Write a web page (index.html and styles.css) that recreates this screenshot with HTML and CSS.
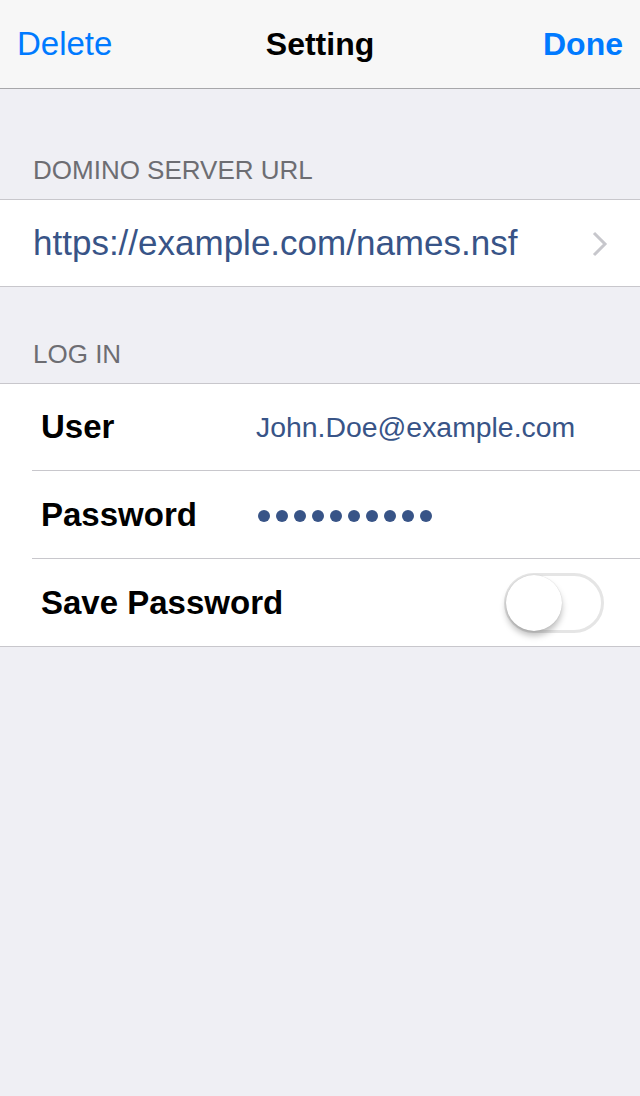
FILE: index.html
```html
<!DOCTYPE html>
<html lang="en">
<head>
  <meta charset="UTF-8">
  <meta name="viewport" content="width=device-width, initial-scale=1.0">
  <title>Setting</title>
  <link rel="stylesheet" href="styles.css">
</head>
<body>

  <!-- Navigation bar -->
  <nav class="navbar">
    <a href="#" class="nav-btn">Delete</a>
    <h1 class="nav-title">Setting</h1>
    <a href="#" class="nav-btn nav-done">Done</a>
  </nav>

  <main>
    <!-- Server section -->
    <h2 class="section-header">DOMINO SERVER URL</h2>
    <div class="group">
      <a href="#" class="row row-link">
        <span class="url">https://example.com/names.nsf</span>
        <svg class="chevron" width="16" height="26" viewBox="0 0 16 26">
          <path d="M2 2 L13 13 L2 24" fill="none" stroke="#c7c7cc" stroke-width="3"/>
        </svg>
      </a>
    </div>

    <!-- Login section -->
    <h2 class="section-header">LOG IN</h2>
    <div class="group">
      <div class="row">
        <span class="label">User</span>
        <span class="value">John.Doe@example.com</span>
      </div>
      <div class="row">
        <span class="label">Password</span>
        <span class="dots">
          <i></i><i></i><i></i><i></i><i></i><i></i><i></i><i></i><i></i><i></i>
        </span>
      </div>
      <div class="row">
        <span class="label">Save Password</span>
        <span class="switch"><span class="knob"></span></span>
      </div>
    </div>
  </main>

</body>
</html>
```

FILE: styles.css
```css
/* General */
* {
  margin: 0;
  padding: 0;
  box-sizing: border-box;
  font-family: "Liberation Sans", Arial, sans-serif;
}

body {
  background-color: #efeff4;
  min-height: 100vh;
}

/* Navbar */
.navbar {
  height: 89px;
  background-color: #f7f7f7;
  border-bottom: 1px solid #a7a7aa;
  display: flex;
  align-items: center;
  justify-content: space-between;
  padding: 0 17px;
  position: relative;
}

.nav-btn {
  color: #007aff;
  text-decoration: none;
  font-size: 33px;
}

.nav-done {
  font-weight: bold;
  font-size: 32px;
}

.nav-title {
  position: absolute;
  left: 0;
  right: 0;
  text-align: center;
  font-size: 32px;
  font-weight: bold;
  color: #000;
  pointer-events: none;
}

/* Section headers */
.section-header {
  font-size: 26px;
  font-weight: normal;
  color: #6d6d72;
  line-height: 31px;
  padding: 0 33px 13px;
  height: 110px;
  display: flex;
  align-items: flex-end;
}

.group + .section-header {
  height: 96px;
}

/* Groups and rows */
.group {
  background-color: #fff;
  border-top: 1px solid #c8c7cc;
  border-bottom: 1px solid #c8c7cc;
  padding-left: 32px;
}

.row {
  height: 88px;
  display: flex;
  align-items: center;
  border-bottom: 1px solid #c8c7cc;
  padding-right: 37px;
}

.row:first-child {
  height: 87px;
}

.row:last-child {
  border-bottom: none;
  height: 87px;
}

.row-link {
  text-decoration: none;
  justify-content: space-between;
  padding-right: 32px;
}

.row-link:first-child {
  height: 86px;
}

.url {
  font-size: 35px;
  color: #385487;
  padding-left: 1px;
}

.chevron {
  display: block;
  margin-top: 1px;
}

.label {
  font-size: 33px;
  font-weight: bold;
  color: #000;
  white-space: nowrap;
  width: 224px;
  flex-shrink: 0;
  padding-left: 9px;
}

.value {
  font-size: 28.4px;
  color: #385487;
}

/* Password dots */
.dots {
  display: flex;
  gap: 6px;
  padding-top: 2px;
  padding-left: 2px;
}

.dots i {
  display: block;
  width: 12px;
  height: 12px;
  border-radius: 50%;
  background-color: #385487;
}

/* Switch */
.switch {
  margin-left: auto;
  width: 100px;
  height: 60px;
  border: 3px solid #e5e5e5;
  border-radius: 30px;
  position: relative;
  margin-right: -1px;
}

.knob {
  position: absolute;
  left: -1px;
  top: -1px;
  width: 56px;
  height: 56px;
  border-radius: 50%;
  background-color: #fff;
  box-shadow: 0 5px 6px rgba(0, 0, 0, 0.25), 0 0 1px rgba(0, 0, 0, 0.2);
}
```
